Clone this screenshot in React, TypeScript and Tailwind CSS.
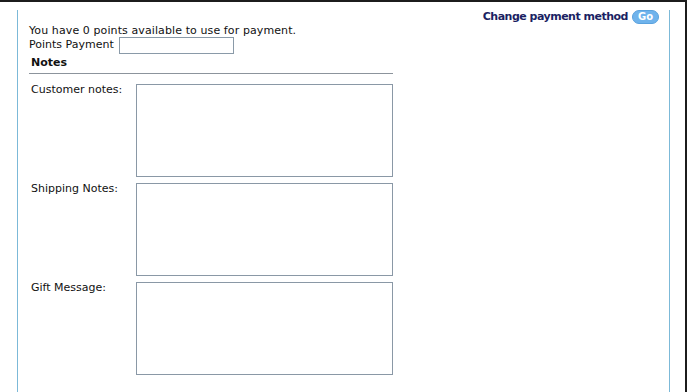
export default function App() {
  const notes = ["Customer notes:", "Shipping Notes:", "Gift Message:"];

  return (
    <div
      className="relative w-[687px] h-[392px] overflow-hidden bg-white border-t-2 border-r-2 border-[#1c1c1c] text-[11px] text-[#111]"
      style={{ fontFamily: '"DejaVu Sans", Verdana, sans-serif' }}
    >
      <div className="ml-[17px] mt-[8px] w-[653px] h-[400px] border-l border-r border-[#7cb9d8]">
        {/* Header */}
        <div className="flex justify-end items-center gap-[4px] pr-[10px] h-[14px]">
          <span className="font-bold tracking-[-0.5px] text-[#1b1f63]">Change payment method</span>
          <button className="h-[14px] w-[27px] rounded-full bg-[#6fb3ec] text-white text-[10px] font-bold leading-none border border-[#5aa2de]">
            Go
          </button>
        </div>

        <div className="pl-[11px] pt-[1px]">
          <div className="leading-[12px] tracking-[0.1px]">You have 0 points available to use for payment.</div>
          <div className="flex items-center gap-[5px] h-[17px]">
            <span>Points Payment</span>
            <input className="w-[115px] h-[17px] border border-[#8a9aa8] bg-white" />
          </div>

          <div className="w-[364px] mt-[2px]">
            <div className="pl-[2px] font-bold leading-[14px]">Notes</div>
            <div className="mt-[3px] border-t border-[#8c949c]" />
          </div>

          <div className="mt-[10px] flex flex-col gap-[6px]">
            {notes.map((n) => (
              <div key={n} className="flex">
                <div className="w-[107px] pl-[2px] leading-[12px]">{n}</div>
                <textarea className="w-[257px] h-[93px] border border-[#8a98a6] bg-white resize-none" />
              </div>
            ))}
          </div>
        </div>
      </div>
    </div>
  );
}
